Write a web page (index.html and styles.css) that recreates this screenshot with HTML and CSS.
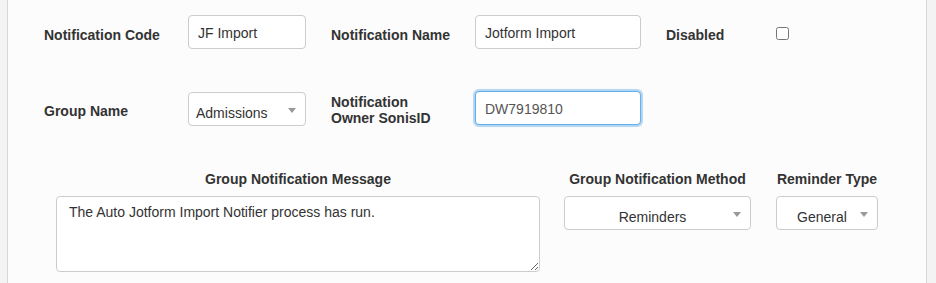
FILE: index.html
```html
<!DOCTYPE html>
<html lang="en">
<head>
    <meta charset="UTF-8">
    <title>Notification Setup</title>
    <link rel="stylesheet" href="styles.css">
</head>
<body>
    <div class="panel">
        <div class="row">
            <label class="label label-wide">Notification Code</label>
            <input class="field field-code" type="text" value="JF Import">
            <label class="label label-wide gap">Notification Name</label>
            <input class="field field-name" type="text" value="Jotform Import">
            <label class="label label-short gap">Disabled</label>
            <input class="check" type="checkbox">
        </div>

        <div class="row row-second">
            <label class="label label-wide">Group Name</label>
            <div class="select-wrap field-code">
                <select class="field select">
                    <option>Admissions</option>
                </select>
            </div>
            <label class="label label-wide gap two-line">Notification<br>Owner SonisID</label>
            <input class="field field-name focused" type="text" value="DW7919810">
        </div>

        <div class="group-row">
            <div class="group-col col-message">
                <div class="group-label">Group Notification Message</div>
                <textarea class="field message">The Auto Jotform Import Notifier process has run.</textarea>
            </div>
            <div class="group-col col-method">
                <div class="group-label">Group Notification Method</div>
                <div class="select-wrap">
                    <select class="field select centered">
                        <option>Reminders</option>
                    </select>
                </div>
            </div>
            <div class="group-col col-type">
                <div class="group-label">Reminder Type</div>
                <div class="select-wrap">
                    <select class="field select centered">
                        <option>General</option>
                    </select>
                </div>
            </div>
        </div>
    </div>
</body>
</html>
```

FILE: styles.css
```css
body {
    margin: 0;
    background-color: #f3f3f3;
    font-family: "Liberation Sans", Arial, sans-serif;
    color: #333;
}

.panel {
    margin-left: 7px;
    width: 920px;
    height: 283px;
    box-sizing: border-box;
    background-color: #fcfcfc;
    border-left: 1px solid #d8d8d8;
    border-right: 1px solid #d8d8d8;
    padding: 15px 0 0 36px;
}

.row {
    display: flex;
    align-items: center;
    height: 34px;
}

.row-second {
    margin-top: 43px;
}

.label {
    font-size: 14px;
    font-weight: bold;
    line-height: 16px;
    padding-top: 6px;
}

.row-second .label {
    padding-top: 3px;
}

.row-second .two-line {
    padding-top: 1px;
}

.label-wide {
    width: 144px;
}

.label-short {
    width: 110px;
}

.gap {
    margin-left: 25px;
}

.field {
    box-sizing: border-box;
    height: 34px;
    border: 1px solid #ccc;
    border-radius: 4px;
    background-color: #fff;
    font-family: "Liberation Sans", Arial, sans-serif;
    font-size: 14px;
    color: #333;
    padding: 1px 9px 0 9px;
    outline: none;
}

.field-code {
    width: 118px;
}

.field-name {
    width: 166px;
}

.focused {
    margin-top: -2px;
    border-color: #66afe9;
    color: #555;
    box-shadow: 0 0 0 2px rgba(102, 175, 233, 0.4), 0 0 3px rgba(102, 175, 233, 0.5);
}

.check {
    margin: 3px 0 0 0;
    width: 13px;
    height: 13px;
}

.select-wrap {
    position: relative;
}

.select-wrap::after {
    content: "";
    position: absolute;
    right: 10px;
    top: 16px;
    border-left: 4px solid transparent;
    border-right: 4px solid transparent;
    border-top: 5px solid #999;
    pointer-events: none;
}

.select {
    -webkit-appearance: none;
    appearance: none;
    width: 100%;
    padding: 7px 24px 0 7px;
}

.centered {
    text-align: center;
    text-align-last: center;
    padding-left: 14px;
}

.group-row {
    display: flex;
    margin-top: 45px;
    margin-left: 12px;
}

.group-col {
    display: flex;
    flex-direction: column;
}

.group-label {
    font-size: 14px;
    font-weight: bold;
    line-height: 16px;
    text-align: center;
    margin-bottom: 9px;
}

.col-message {
    width: 484px;
}

.col-method {
    width: 187px;
    margin-left: 24px;
}

.col-type {
    width: 102px;
    margin-left: 25px;
}

.message {
    height: 76px;
    padding: 5px 12px;
    resize: vertical;
    line-height: 20px;
}
```
